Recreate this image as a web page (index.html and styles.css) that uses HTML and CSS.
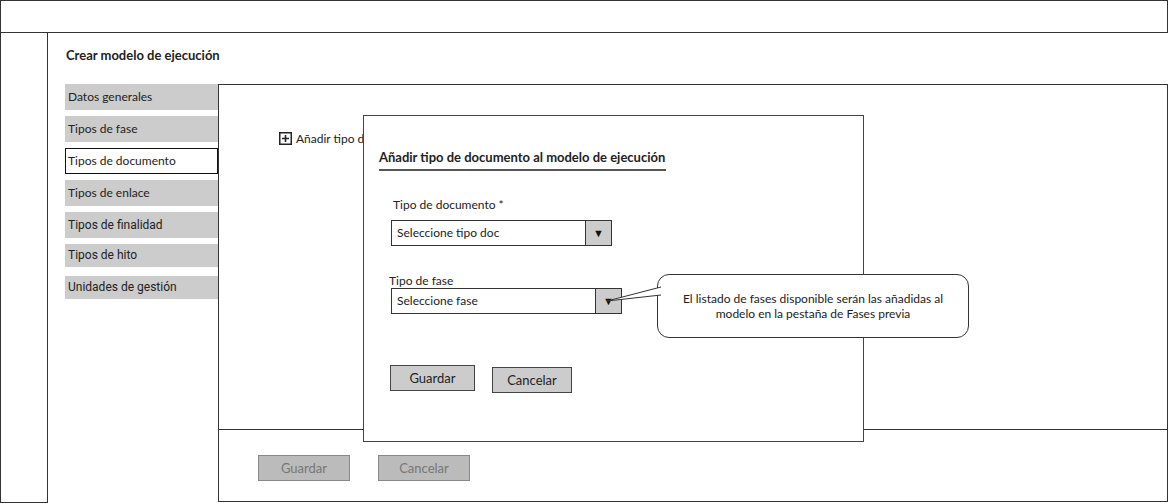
FILE: index.html
```html
<!DOCTYPE html>
<html>
<head>
  <meta charset="UTF-8">
  <title>Crear modelo de ejecución</title>
  <link rel="stylesheet" href="styles.css">
</head>
<body>
  <div class="topbar"></div>

  <div class="layout">
    <aside class="rail"></aside>

    <main class="page">
      <h1>Crear modelo de ejecución</h1>

      <div class="workspace">
        <nav class="tabs">
          <div class="tab">Datos generales</div>
          <div class="tab">Tipos de fase</div>
          <div class="tab active">Tipos de documento</div>
          <div class="tab">Tipos de enlace</div>
          <div class="tab roboto">Tipos de finalidad</div>
          <div class="tab roboto short">Tipos de hito</div>
          <div class="tab roboto short">Unidades de gestión</div>
        </nav>

        <section class="panel">
          <div class="panel-body">
            <div class="add">
              <svg width="13" height="13" viewBox="0 0 13 13">
                <rect x="0.75" y="0.75" width="11.5" height="11.5" fill="#fff" stroke="#222" stroke-width="1.5"/>
                <path d="M6.5 3v7M3 6.5h7" stroke="#222" stroke-width="1.6"/>
              </svg>
              <span>Añadir tipo de documento</span>
            </div>
          </div>
          <div class="panel-foot">
            <button class="btn-off">Guardar</button>
            <button class="btn-off">Cancelar</button>
          </div>
        </section>
      </div>
    </main>
  </div>

  <div class="modal">
    <h2>Añadir tipo de documento al modelo de ejecución</h2>

    <div class="field first">
      <label>Tipo de documento *</label>
      <div class="select doc">
        <span>Seleccione tipo doc</span>
        <i class="arrow">▼</i>
      </div>
    </div>

    <div class="field second">
      <label>Tipo de fase</label>
      <div class="select fase">
        <span>Seleccione fase</span>
        <i class="arrow">▼</i>
      </div>
    </div>

    <div class="actions">
      <button class="btn save">Guardar</button>
      <button class="btn cancel">Cancelar</button>
    </div>
  </div>

  <div class="callout">
    <svg class="pointer" width="56" height="20" viewBox="0 0 56 20">
      <path d="M55 3 L1 17 L55 11" fill="#fff" stroke="#333" stroke-width="1"/>
    </svg>
    El listado de fases disponible serán las añadidas al<br>
    modelo en la pestaña de Fases previa
  </div>
</body>
</html>
```

FILE: styles.css
```css
* { box-sizing: border-box; }
body { margin: 0; width: 1168px; height: 503px; overflow: hidden; background: #fff; font-family: Lato, "Open Sans", sans-serif; color: #222; position: relative; }

.topbar { height: 33px; width: 1168px; border: 1px solid #333; }

.layout { display: flex; height: 470px; }
.rail { width: 48px; border: 1px solid #333; border-top: none; }
.page { flex: 1; padding: 14px 0 0 17px; }
.page h1 { margin: 0 0 21px 1px; font-size: 13px; line-height: 16px; font-weight: bold; }

.workspace { display: flex; }
.tabs { width: 153px; display: flex; flex-direction: column; gap: 6px; }
.tab { height: 26px; line-height: 26px; padding-left: 3px; background: #ccc; font-size: 12px; }
.tab.short { height: 23px; line-height: 23px; margin-bottom: 3px; }
.tab.roboto { font-family: Roboto, sans-serif; }
.tab.active { background: #fff; border: 1px solid #111; line-height: 24px; padding-left: 2px; }

.panel { width: 950px; height: 418px; border: 1px solid #333; display: flex; flex-direction: column; }
.panel-body { height: 345px; border-bottom: 1px solid #333; padding: 46px 0 0 60px; }
.add { display: flex; align-items: center; gap: 4px; font-size: 12px; }
.add svg { display: block; }
.panel-foot { display: flex; gap: 28px; padding: 25px 0 0 39px; }
.btn-off { width: 92px; height: 26px; background: #bbb; border: 1px solid #888; color: #777; font: 13px Lato, sans-serif; }

.modal { position: absolute; left: 363px; top: 115px; width: 501px; height: 327px; background: #fff; border: 1px solid #444; padding: 30px 0 0 15px; }
.modal h2 { display: inline-block; width: 287px; margin: 0; font-size: 13px; line-height: 16px; font-weight: bold; padding-bottom: 4px; border-bottom: 2px solid #555; }
.field label { display: block; font-size: 12px; line-height: 16px; }
.field.first { margin: 26px 0 0 12px; }
.field.first label { padding-left: 2px; margin-bottom: 7px; }
.field.second { margin: 28px 0 0 12px; }
.field.second label { margin-left: -2px; line-height: 14px; }
.select { display: flex; height: 26px; border: 1px solid #333; background: #fff; font-size: 12px; }
.select span { flex: 1; line-height: 24px; padding-left: 5px; }
.select.doc { width: 221px; }
.select.fase { width: 231px; }
.arrow { width: 26px; background: #ccc; border-left: 1px solid #333; font-style: normal; font-size: 11px; text-align: center; line-height: 24px; color: #111; }

.actions { display: flex; align-items: flex-start; gap: 17px; margin: 51px 0 0 11px; }
.btn { height: 26px; background: #ccc; border: 1px solid #444; color: #222; font: 13px Lato, sans-serif; }
.btn.save { width: 85px; }
.btn.cancel { width: 80px; margin-top: 2px; }

.callout { position: absolute; left: 657px; top: 274px; width: 312px; height: 64px; border: 1px solid #333; border-radius: 12px; background: #fff; font-size: 12px; line-height: 15px; text-align: center; padding-top: 16px; }
.callout .pointer { position: absolute; left: -52px; top: 9px; }
```
